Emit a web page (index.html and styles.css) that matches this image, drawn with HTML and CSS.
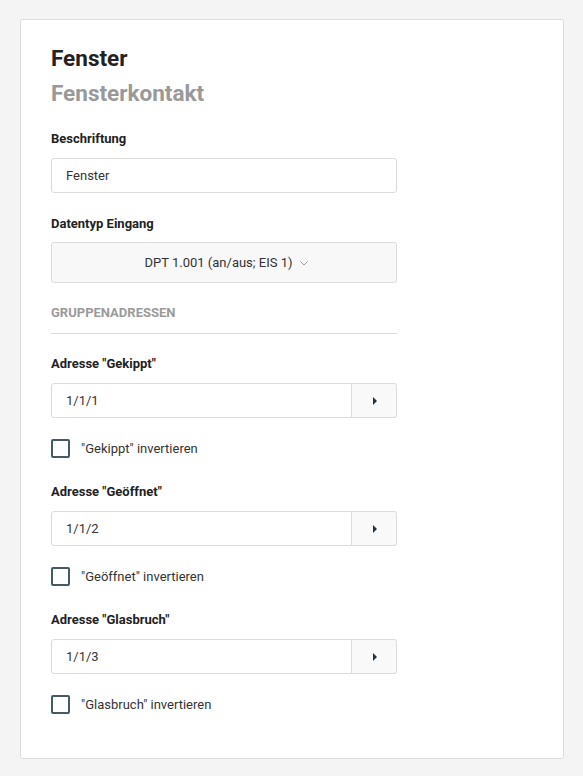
FILE: index.html
```html
<!DOCTYPE html>
<html lang="de">
<head>
  <meta charset="UTF-8">
  <meta name="viewport" content="width=device-width, initial-scale=1.0">
  <title>Fenster</title>
  <link rel="stylesheet" href="styles.css">
</head>
<body>
  <div class="card">
    <h1 class="title">Fenster</h1>
    <h2 class="subtitle">Fensterkontakt</h2>

    <div class="field">
      <label class="field-label">Beschriftung</label>
      <input class="text-input" type="text" value="Fenster">
    </div>

    <div class="field">
      <label class="field-label">Datentyp Eingang</label>
      <button class="select">
        DPT 1.001 (an/aus; EIS 1)
        <svg class="chevron" width="8" height="5" viewBox="0 0 8 5"><path d="M0.5 0.5 L4 4 L7.5 0.5" fill="none" stroke="#999" stroke-width="1"/></svg>
      </button>
    </div>

    <div class="section-title">Gruppenadressen</div>

    <div class="address">
      <label class="field-label">Adresse "Gekippt"</label>
      <div class="input-group">
        <input class="text-input" type="text" value="1/1/1">
        <button class="go"><svg width="4" height="8" viewBox="0 0 4 8"><path d="M0 0 L4 4 L0 8 Z" fill="#263238"/></svg></button>
      </div>
      <label class="check"><span class="box"></span>"Gekippt" invertieren</label>
    </div>

    <div class="address">
      <label class="field-label">Adresse "Geöffnet"</label>
      <div class="input-group">
        <input class="text-input" type="text" value="1/1/2">
        <button class="go"><svg width="4" height="8" viewBox="0 0 4 8"><path d="M0 0 L4 4 L0 8 Z" fill="#263238"/></svg></button>
      </div>
      <label class="check"><span class="box"></span>"Geöffnet" invertieren</label>
    </div>

    <div class="address">
      <label class="field-label">Adresse "Glasbruch"</label>
      <div class="input-group">
        <input class="text-input" type="text" value="1/1/3">
        <button class="go"><svg width="4" height="8" viewBox="0 0 4 8"><path d="M0 0 L4 4 L0 8 Z" fill="#263238"/></svg></button>
      </div>
      <label class="check"><span class="box"></span>"Glasbruch" invertieren</label>
    </div>
  </div>
</body>
</html>
```

FILE: styles.css
```css
body {
  margin: 0;
  padding: 19px 19px 16px 20px;
  background-color: #f4f4f4;
  font-family: Roboto, "Liberation Sans", sans-serif;
  color: #222;
}
.card {
  background-color: #fff;
  border: 1px solid #dcdcdc;
  border-radius: 3px;
  padding: 24px 30px 37px 30px;
  height: 677px;
}
.title,
.subtitle {
  margin: 0;
  font-size: 22.5px;
  line-height: 28px;
  font-weight: 700;
}
.title {
  color: #222;
}
.subtitle {
  margin-top: 7px;
  color: #999;
}
.field {
  width: 346px;
  margin-top: 24px;
}
.field + .field {
  margin-top: 23px;
}
.field-label {
  display: block;
  font-size: 13px;
  line-height: 16px;
  font-weight: 700;
  color: #222;
}
.text-input {
  display: block;
  box-sizing: border-box;
  width: 100%;
  height: 35px;
  margin-top: 11px;
  padding: 0 14px;
  border: 1px solid #dcdcdc;
  border-radius: 3px;
  font-family: inherit;
  font-size: 13px;
  color: #333;
  outline: none;
}
.select {
  display: flex;
  align-items: center;
  justify-content: center;
  gap: 7px;
  box-sizing: border-box;
  width: 100%;
  height: 41px;
  margin-top: 10px;
  border: 1px solid #dcdcdc;
  border-radius: 3px;
  background-color: #f8f8f8;
  font-family: inherit;
  font-size: 13px;
  color: #333;
  padding: 0 0 0 4px;
}
.chevron {
  margin-top: 1px;
}
.section-title {
  width: 346px;
  margin-top: 22px;
  padding-bottom: 12px;
  border-bottom: 1px solid #dcdcdc;
  font-size: 13px;
  line-height: 16px;
  font-weight: 700;
  text-transform: uppercase;
  color: #9a9a9a;
}
.address {
  width: 346px;
  margin-top: 22px;
}
.address + .address {
  margin-top: 26px;
}
.input-group {
  display: flex;
  margin-top: 11px;
}
.input-group .text-input {
  margin-top: 0;
  flex: 1;
  border-radius: 3px 0 0 3px;
}
.go {
  display: flex;
  align-items: center;
  justify-content: center;
  width: 45px;
  height: 35px;
  border: 1px solid #dcdcdc;
  border-left: none;
  border-radius: 0 3px 3px 0;
  background-color: #f9f9f9;
  padding: 0 0 0 1px;
}
.check {
  display: flex;
  align-items: center;
  gap: 11px;
  margin-top: 21px;
  font-size: 13px;
  line-height: 18px;
  color: #333;
}
.box {
  box-sizing: border-box;
  width: 19px;
  height: 19px;
  border: 2px solid #455a64;
  border-radius: 2px;
}
```
